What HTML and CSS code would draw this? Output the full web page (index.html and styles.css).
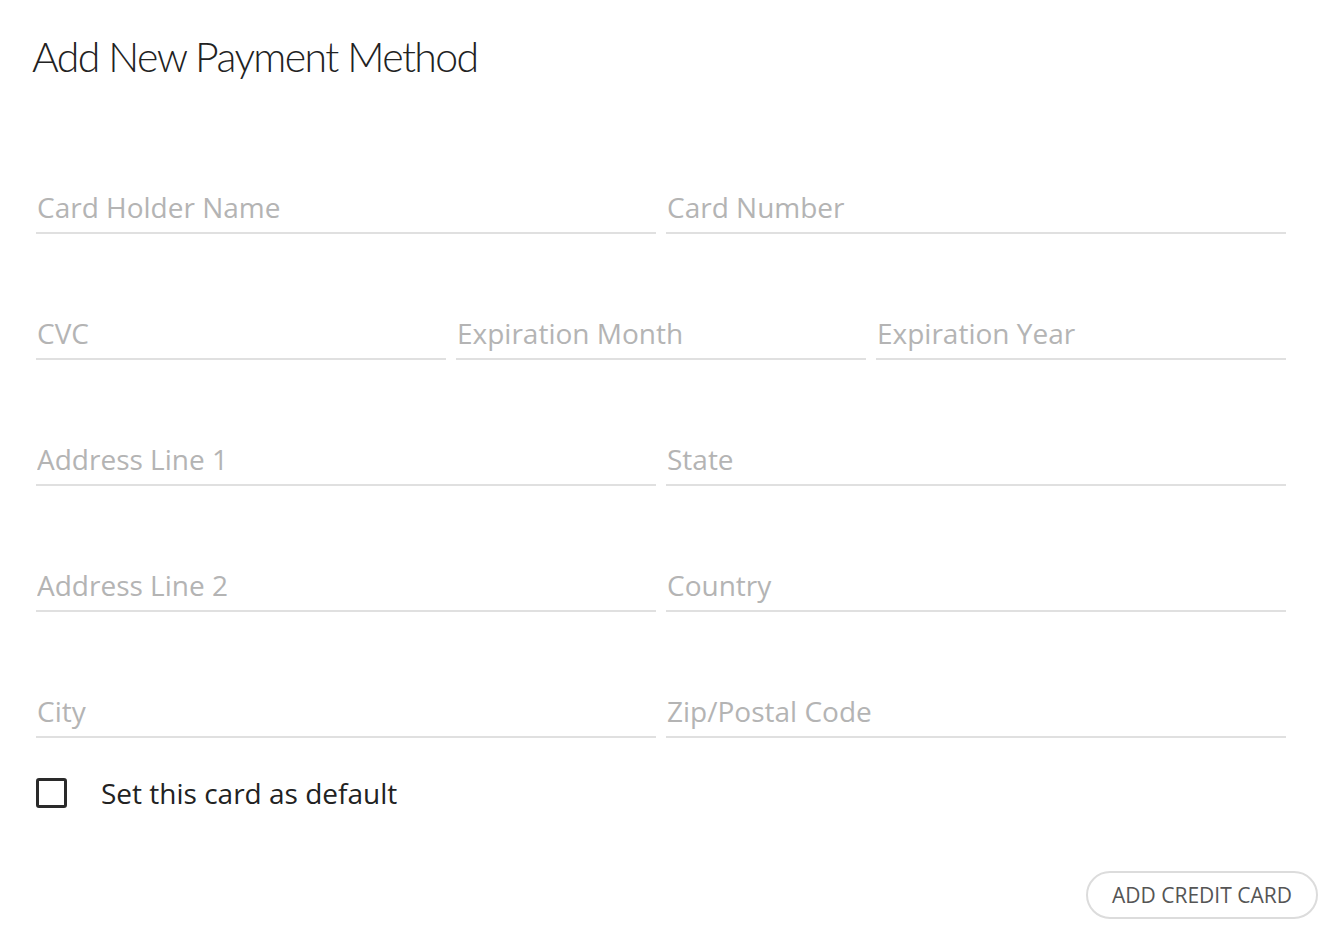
FILE: index.html
```html
<!DOCTYPE html>
<html lang="en">
<head>
<meta charset="utf-8">
<title>Add New Payment Method</title>
<link rel="stylesheet" href="styles.css">
</head>
<body>
<div class="page">
  <h1 class="title">Add New Payment Method</h1>
  <form class="form">
    <div class="row cols-2">
      <input class="field" type="text" placeholder="Card Holder Name">
      <input class="field" type="text" placeholder="Card Number">
    </div>
    <div class="row cols-3">
      <input class="field" type="text" placeholder="CVC">
      <input class="field" type="text" placeholder="Expiration Month">
      <input class="field" type="text" placeholder="Expiration Year">
    </div>
    <div class="row cols-2">
      <input class="field" type="text" placeholder="Address Line 1">
      <input class="field" type="text" placeholder="State">
    </div>
    <div class="row cols-2">
      <input class="field" type="text" placeholder="Address Line 2">
      <input class="field" type="text" placeholder="Country">
    </div>
    <div class="row cols-2">
      <input class="field" type="text" placeholder="City">
      <input class="field" type="text" placeholder="Zip/Postal Code">
    </div>
    <label class="check">
      <span class="box"></span>
      <span class="check-label">Set this card as default</span>
    </label>
    <div class="actions">
      <button type="button" class="btn">ADD CREDIT CARD</button>
    </div>
  </form>
</div>
</body>
</html>
```

FILE: styles.css
```css
html, body {
  margin: 0;
  padding: 0;
  background: #ffffff;
}
.page {
  padding: 0 9px 0 32px;
  font-family: "Open Sans", "Liberation Sans", sans-serif;
}
.title {
  margin: 0;
  padding-top: 32px;
  font-family: "Lato", "Open Sans", sans-serif;
  font-weight: 300;
  font-size: 41px;
  line-height: 50px;
  color: #222;
  letter-spacing: -1.6px;
}
.form {
  margin-left: 4px;
  width: 1250px;
  padding-top: 112px;
}
.row {
  display: grid;
  gap: 10px;
  margin-top: 86px;
}
.row:first-child {
  margin-top: 0;
}
.cols-2 { grid-template-columns: 1fr 1fr; }
.cols-3 { grid-template-columns: 1fr 1fr 1fr; }
.field {
  display: block;
  width: 100%;
  box-sizing: border-box;
  height: 40px;
  border: none;
  border-bottom: 2px solid #e0e0e0;
  padding: 0 0 12px 1px;
  font-family: "Open Sans", "Liberation Sans", sans-serif;
  font-size: 28px;
  color: #333;
  background: transparent;
  outline: none;
}
.field::placeholder {
  color: #b4b4b4;
}
.check {
  display: flex;
  align-items: center;
  gap: 34px;
  margin-top: 36px;
  cursor: pointer;
}
.box {
  width: 31px;
  height: 30px;
  box-sizing: border-box;
  border: 3px solid #2a2a2a;
  border-radius: 3px;
}
.check-label {
  font-size: 28px;
  color: #222;
}
.actions {
  display: flex;
  justify-content: flex-end;
  margin-right: -32px;
  margin-top: 59px;
}
.btn {
  height: 48px;
  width: 232px;
  border: 2px solid #dcdcdc;
  border-radius: 24px;
  background: #fff;
  font-family: "Open Sans", "Liberation Sans", sans-serif;
  font-size: 21px;
  color: #555;
  padding: 0;
}
```
